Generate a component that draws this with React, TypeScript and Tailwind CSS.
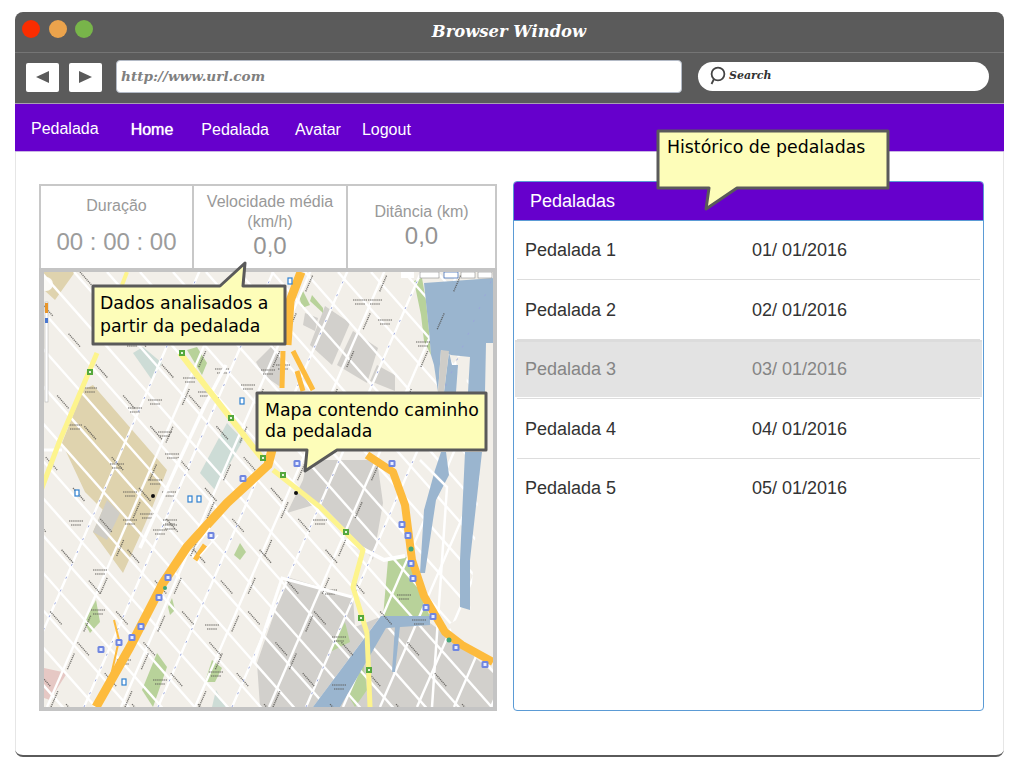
import React from 'react';

const hand = "[font-family:'DejaVu_Serif',serif] italic";

// street grid of the map, in page coordinates
const diagonals = Array.from({ length: 30 }, (_, i) => -520 + i * 33);
const steeps = Array.from({ length: 24 }, (_, i) => 10 + i * 37);
const nameDash = '1.2 0.8 '.repeat(8) + '1.2 24';

const shields = [
  [243, 478], [168, 577], [159, 597], [141, 626], [132, 637], [119, 642], [101, 649], [402, 524], [408, 535], [411, 563],
  [413, 578], [426, 607], [433, 616], [456, 647], [485, 664], [297, 463], [392, 463], [211, 535],
];
const greens = [[283, 475], [346, 532], [361, 618], [369, 670], [263, 458], [231, 418], [182, 353], [90, 372], [38, 499]];
const tinyBlue = [[77, 493], [190, 499], [199, 499], [124, 682], [242, 401], [290, 281]];
const labels = [
  [90, 388], [135, 408], [165, 432], [172, 454], [169, 492], [130, 492], [147, 514], [130, 520], [170, 520], [205, 392],
  [222, 369], [190, 378], [132, 342], [108, 338], [248, 385], [268, 370], [375, 300], [360, 300], [385, 320], [423, 342],
  [283, 365], [155, 400], [155, 480], [117, 464], [75, 425], [76, 521], [100, 570], [98, 610], [170, 525], [212, 625],
  [160, 680], [124, 660], [216, 672], [339, 637], [339, 685], [404, 595], [419, 620], [160, 530], [320, 520], [330, 590],
];

const MapView = () => (
  <svg viewBox="44 272 449 435" className="block w-[449px] h-[435px]">
    <defs>
      <filter id="soft" x="0" y="0" width="100%" height="100%">
        <feGaussianBlur stdDeviation="0.4" />
      </filter>
    </defs>
    <g filter="url(#soft)">
      <rect x="44" y="272" width="449" height="435" fill="#f2efe9" />
      {/* tan blocks */}
      <polygon points="44,272 75,272 55,300 44,290" fill="#dfd3ae" />
      <polygon points="83,390 93,385 167,470 152,508 138,540 123,573 93,532 107,500 103,510 85,492 62,443" fill="#dfd3ae" />
      <polygon points="107,500 120,513 107,540 93,532" fill="#cfcdc7" />
      {/* grey industrial blocks */}
      <polygon points="256,362 273,345 283,362 282,388 263,375" fill="#d2d0cc" />
      <polygon points="305,313 318,318 315,331 303,325" fill="#d2d0cc" />
      <polygon points="325,306 350,323 332,365 310,345" fill="#d2d0cc" />
      <polygon points="353,331 378,348 367,383 337,365" fill="#d2d0cc" />
      <polygon points="377,365 395,375 395,391 370,381" fill="#d2d0cc" />
      <polygon points="287,513 303,480 307,460 377,460 383,503 373,560 363,547 320,503" fill="#d2d0cc" />
      <polygon points="257,663 287,577 353,597 355,627 380,617 313,707 260,707" fill="#d2d0cc" />
      <polygon points="383,625 430,623 463,647 493,673 493,707 337,707" fill="#d2d0cc" />
      {/* parks */}
      <polygon points="383,617 388,560 407,557 430,617" fill="#b8d29a" />
      <polygon points="142,690 157,653 167,667 153,707" fill="#b8d29a" />
      <polygon points="343,687 363,660 367,690 355,707" fill="#b8d29a" />
      <polygon points="330,652 345,622 350,642" fill="#b8d29a" />
      <polygon points="84,622 96,600 100,622 90,633" fill="#b8d29a" />
      <polygon points="234,555 240,543 246,552 240,560" fill="#b8d29a" />
      <polygon points="168,607 172,598 175,610 170,615" fill="#b8d29a" />
      <polygon points="205,682 212,660 222,668 215,682" fill="#b8d29a" />
      <polygon points="187,350 197,347 207,363 202,375" fill="#b8d29a" />
      <polygon points="299,295 303,291 310,305 302,308" fill="#b8d29a" />
      <polygon points="312,295 323,308 323,313 310,301" fill="#b8d29a" />
      <polygon points="414,281 422,278 426,301 429,331 431,355 424,341 421,315" fill="#b8d29a" />
      {/* plazas */}
      <polygon points="133,353 143,347 162,363 152,380" fill="#cddcd6" />
      <polygon points="200,473 227,423 243,440 215,490" fill="#cddcd6" />
      <polygon points="212,707 216,690 226,707" fill="#cddcd6" />
      <polygon points="44,668 67,673 50,700 44,698" fill="#e6c8c4" />
      {/* streets */}
      <g stroke="#ffffff" strokeWidth="2.4" fill="none">
        {diagonals.map((x) => (
          <line key={x} x1={x} y1={272} x2={x + 420} y2={272 + 475} />
        ))}
        {steeps.filter((x) => x < 700).map((x) => (
          <line key={x} x1={x} y1={707} x2={x + 190} y2={707 - 437} />
        ))}
      </g>
      {/* the shore is free of the grid */}
      <polygon points="472,343 495,343 495,662 462,645 448,625 470,612 480,470" fill="#f2efe9" />
      <polygon points="452,356 468,358 466,392 456,392 458,365" fill="#f2efe9" />
      <polygon points="424,283 495,278 495,343 486,343 485,392 468,392 470,357 451,355 441,350 438,392 434,365 431,355 429,331" fill="#9ab5cf" />
      <polygon points="444,392 449,352 452,365 458,365 456,392" fill="#9ab5cf" />
      <polygon points="465,452 482,452 480,470 470,560 470,610 460,607 460,560" fill="#9ab5cf" />
      <polygon points="441,452 446,452 449,475 436,500 425,573 420,573 424,510 435,470" fill="#9ab5cf" />
      <polygon points="313,707 381,616 430,616 430,625 386,628 340,707" fill="#9ab5cf" />
      <polygon points="395,626 400,626 395,672 392,672" fill="#9ab5cf" />
      <polygon points="441,350 449,351 444,392 438,392" fill="#cfcdc8" />
      <path d="M420 460 L447 487 L432 707" stroke="#fff" strokeWidth="2.5" fill="none" />
      {/* street names, dark specks along the roads */}
      <g stroke="#4f4d49" strokeWidth="1.4" strokeDasharray={nameDash} fill="none" opacity="0.75">
        {diagonals.filter((x, i) => i % 2 === 0 && x < 100).map((x) => (
          <line key={x} x1={x + 6} y1={272} x2={x + 426} y2={272 + 475} />
        ))}
        {steeps.filter((x, i) => i % 2 === 1 && x < 330).map((x) => (
          <line key={x} x1={x + 4} y1={707} x2={x + 194} y2={707 - 437} />
        ))}
      </g>
      <g stroke="#9aa6dc" strokeWidth="1" strokeDasharray="2 12" fill="none">
        {steeps.filter((x, i) => i % 2 === 0 && x < 320).map((x) => (
          <line key={x} x1={x} y1={707} x2={x + 190} y2={707 - 437} />
        ))}
      </g>
      <g stroke="#55534f" strokeWidth="1.6" strokeDasharray="1.4 0.7" fill="none" opacity="0.6">
        {labels.map(([x, y]) => (
          <path key={`${x}-${y}`} d={`M${x - 7} ${y} h14 M${x - 5} ${y + 4} h10`} />
        ))}
      </g>
      <path d="M254 662 L282 578 L352 597" stroke="#fff" strokeWidth="3" fill="none" />
      <path d="M346 540 L384 560 L405 556" stroke="#fff" strokeWidth="4" fill="none" />
      <path d="M140 548 L175 470 L205 405 L226 365" stroke="#fff" strokeWidth="3.5" fill="none" />
      <path d="M44 450 L62 450" stroke="#fff" strokeWidth="3" fill="none" />
      {/* yellow roads */}
      <g stroke="#fdf48d" fill="none" strokeLinejoin="round">
        <path d="M127 272 L122 285" strokeWidth="4" />
        <path d="M180 353 L253 447 L262 458" strokeWidth="6" />
        <path d="M273 470 L320 507 L363 550 L353 587 L367 633 L370 707" strokeWidth="5" />
        <path d="M97 353 L60 440 L40 493" strokeWidth="5" />
      </g>
      {/* highways */}
      <g stroke="#fdbb3e" fill="none" strokeLinejoin="round">
        <path d="M96 707 L130 647 L163 583 L187 547 L227 503 L268 465 L285 400" strokeWidth="9" />
        <path d="M287 345 L290 301 L301 272" strokeWidth="9" />
        <path d="M283 351 L282 388 M293 351 L313 390 M297 371 L303 391" strokeWidth="5" />
        <path d="M367 455 L393 472 L405 505 L412 560 L424 596 L445 632 L462 645 L493 662" strokeWidth="8" />
        <path d="M114 620 L119 640 L110 680 L104 695" strokeWidth="2" />
        <path d="M195 560 L205 545" strokeWidth="5" />
      </g>
      <path d="M195 548 L210 528 M200 556 L218 535" stroke="#fff" strokeWidth="1.5" />
      {shields.map(([x, y], i) => (
        <g key={i}>
          <rect x={x - 3.5} y={y - 3} width="7" height="7" rx="1.5" fill="#6f86e0" />
          <rect x={x - 1.5} y={y - 1} width="3" height="3" fill="#e8ecff" />
        </g>
      ))}
      {greens.map(([x, y], i) => (
        <g key={i}>
          <rect x={x - 3} y={y - 3} width="6" height="6" fill="#55a83c" />
          <rect x={x - 1} y={y - 1} width="2" height="2" fill="#e6f5df" />
        </g>
      ))}
      {tinyBlue.map(([x, y], i) => (
        <rect key={i} x={x - 2} y={y - 3} width="4" height="6" fill="#fff" stroke="#2f80d0" strokeWidth="1.2" />
      ))}
      <circle cx="165" cy="588" r="2" fill="#3fa77a" />
      <circle cx="411" cy="549" r="2.5" fill="#3fa77a" />
      <circle cx="449" cy="640" r="2.5" fill="#3fa77a" />
      <circle cx="153" cy="496" r="2" fill="#111" />
      <circle cx="296" cy="493" r="2" fill="#111" />
      {/* map controls */}
      <rect x="401" y="272" width="13" height="6" fill="#fff" />
      <rect x="420" y="272" width="19" height="6" fill="#fff" stroke="#777" strokeWidth="0.5" />
      <rect x="444" y="272" width="14" height="6" fill="#fff" stroke="#2f5fb0" strokeWidth="0.7" />
      <rect x="461" y="272" width="14" height="6" fill="#fff" stroke="#777" strokeWidth="0.5" />
      <rect x="478" y="272" width="14" height="6" fill="#fff" stroke="#777" strokeWidth="0.5" />
      <circle cx="46" cy="284" r="7" fill="#fff" opacity="0.9" />
      <rect x="45" y="302" width="3" height="100" fill="#fff" stroke="#aaa" strokeWidth="0.5" />
      <rect x="45" y="303" width="3" height="10" fill="#e8952c" />
      <rect x="45" y="318" width="3" height="5" fill="#4a77d0" />
    </g>
  </svg>
);

const Stat = ({ label, value, big, className }: { label: React.ReactNode; value: string; big?: boolean; className: string }) => (
  <div className={`flex flex-col items-center text-[#999] text-center ${className}`}>
    <div className="text-base leading-[20px]">{label}</div>
    <div className={`text-2xl leading-[28px] ${big ? 'mt-[12px] text-[#9c9c9c]' : 'text-[#949494]'}`}>{value}</div>
  </div>
);

const Callout = ({
  className,
  box,
  tail,
  children,
  textClass,
}: {
  className: string;
  box: [number, number];
  tail: string;
  children: React.ReactNode;
  textClass: string;
}) => (
  <div className={`absolute ${className}`} style={{ width: box[0], height: box[1] }}>
    <svg className="absolute inset-0 overflow-visible" width={box[0]} height={box[1]}>
      <path d={tail} fill="#fdfdb9" stroke="#5a5a5a" strokeWidth="3" strokeLinejoin="round" />
    </svg>
    <div className={`absolute [font-family:'DejaVu_Sans',sans-serif] text-[17.33px] text-black whitespace-pre ${textClass}`}>
      {children}
    </div>
  </div>
);

const rows = [
  ['Pedalada 1', '01/ 01/2016'],
  ['Pedalada 2', '02/ 01/2016'],
  ['Pedalada 3', '03/ 01/2016'],
  ['Pedalada 4', '04/ 01/2016'],
  ['Pedalada 5', '05/ 01/2016'],
];

export default function App() {
  return (
    <div className="relative w-[1024px] h-[768px] bg-white overflow-hidden pt-3 pl-[15px] font-['Liberation_Sans',Arial,sans-serif]">
      <div className="w-[989px] h-[745px] rounded-lg overflow-hidden flex flex-col bg-white border-b-2 border-[#5a5a5a]">
        {/* browser chrome */}
        <div className="h-[40px] bg-[#5b5b5b] relative flex items-center justify-center">
          <div className="absolute left-[7px] top-[8px] flex gap-[8.5px]">
            <span className="w-[18px] h-[18px] rounded-full bg-[#fa2d00]" />
            <span className="w-[18px] h-[18px] rounded-full bg-[#eba34c]" />
            <span className="w-[18px] h-[18px] rounded-full bg-[#78b54a]" />
          </div>
          <span className={`${hand} text-white font-bold text-[16.4px] ml-[-1px]`}>Browser Window</span>
        </div>
        <div className="h-[52px] bg-[#5b5b5b] border-t border-[#757575] border-b border-b-[#a89fb0] flex items-center pl-[11px] pb-[4px]">
          <button className="w-[33px] h-[29px] mt-[2px] bg-white rounded-[2px] flex items-center justify-center">
            <svg width="14" height="12" viewBox="0 0 14 12"><polygon points="0,6 13,0 13,12" fill="#5a5a5a" /></svg>
          </button>
          <button className="w-[33px] h-[29px] mt-[2px] ml-[10px] bg-white rounded-[2px] flex items-center justify-center">
            <svg width="13" height="12" viewBox="0 0 13 12"><polygon points="13,6 0,0 0,12" fill="#5a5a5a" /></svg>
          </button>
          <div className={`ml-[14px] w-[566px] h-[33px] bg-white border border-[#b3bac6] rounded-[4px] flex items-center pl-[4px] ${hand} text-[#808080] font-bold text-[13.6px]`}>
            http://www.url.com
          </div>
          <div className="ml-[16px] w-[291px] h-[29px] bg-white rounded-full flex items-center pl-[11px]">
            <svg width="18" height="20" viewBox="0 0 18 20" fill="none" stroke="#444" strokeWidth="1.8">
              <circle cx="9" cy="8" r="6.4" />
              <path d="M5 13 L2.5 18" />
            </svg>
            <span className={`${hand} text-[#333] font-bold text-[11px] ml-[2px]`}>Search</span>
          </div>
        </div>
        {/* app nav */}
        <div className="h-[48px] bg-[#6600cc] border-b border-b-[#c9b5e3] flex items-center text-white text-base pt-[5px]">
          <span className="ml-4 -mt-[2px]">Pedalada</span>
          <span className="ml-[32px] [text-shadow:0_0_1px_#fff]">Home</span>
          <span className="ml-[28px]">Pedalada</span>
          <span className="ml-[26px]">Avatar</span>
          <span className="ml-[21px]">Logout</span>
        </div>
        {/* page */}
        <div className="flex-1 flex items-start pl-[23px] pt-[29px] gap-[16px] border-x border-[#e6e6e6]">
          <div className="w-[458px] mt-[3px]">
            <div className="flex h-[84px] border-2 border-b-0 border-[#c8c8c8]">
              <Stat label="Duração" value="00 : 00 : 00" big className="w-[153px] border-r-2 border-[#c8c8c8] pt-[10px]" />
              <Stat label={<>Velocidade média<br />(km/h)</>} value="0,0" className="w-[154px] border-r-2 border-[#c8c8c8] pt-[6px]" />
              <Stat label="Ditância (km)" value="0,0" className="flex-1 pt-[16px]" />
            </div>
            <div className="border-[#c4c4c4] border-t-4 border-l-[5px] border-r-4 border-b-4">
              <MapView />
            </div>
          </div>
          <div className="w-[471px] h-[530px] border border-[#5b9bd5] rounded-[4px] overflow-hidden">
            <div className="h-[39px] bg-[#6600cc] border-b border-b-[#5b9bd5] flex items-center pl-4 text-white text-lg">Pedaladas</div>
            <div className="text-[#333] text-lg">
              {rows.map(([name, date], i) => (
                <div key={name} className={`h-[59.4px] mx-[3px] ${i < 4 ? 'border-b border-[#ddd]' : ''}`}>
                  {i === 2 ? (
                    <div className="flex items-center h-[57.5px] -mx-[2px] pl-[10px] pb-[2px] bg-[#e3e3e3] text-[#858585] border-t-2 border-[#dcdcdc]">
                      <span className="w-[227px]">{name}</span>
                      <span>{date}</span>
                    </div>
                  ) : (
                    <div className={`flex items-center h-[57.5px] pl-[8px] ${i === 0 ? '' : 'pt-[2px]'}`}>
                      <span className="w-[227px]">{name}</span>
                      <span>{date}</span>
                    </div>
                  )}
                </div>
              ))}
            </div>
          </div>
        </div>
      </div>
      <Callout
        className="left-[92px] top-[285px]"
        box={[194, 60]}
        tail="M1 1 L128 1 L153 -22 L151 1 L193 1 L193 59 L1 59 Z"
        textClass="left-[8px] top-[7px] leading-[23px]"
      >
        {'Dados analisados a\npartir da pedalada'}
      </Callout>
      <Callout
        className="left-[256px] top-[392px]"
        box={[231, 59]}
        tail="M1 1 L230 1 L230 58 L81 58 L49 79 L51 58 L1 58 Z"
        textClass="left-[9px] top-[8px] leading-[21px]"
      >
        {'Mapa contendo caminho\nda pedalada'}
      </Callout>
      <Callout
        className="left-[657px] top-[130px]"
        box={[232, 59]}
        tail="M1 1 L231 1 L231 58 L80 58 L49 79 L52 58 L1 58 Z"
        textClass="left-[10px] top-[6px] leading-[22.5px]"
      >
        Histórico de pedaladas
      </Callout>
    </div>
  );
}
